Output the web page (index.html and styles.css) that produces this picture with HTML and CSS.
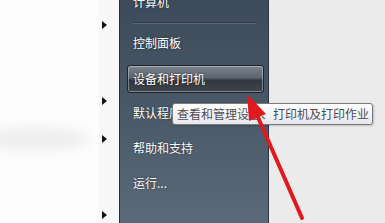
FILE: index.html
```html
<!DOCTYPE html>
<html lang="zh-CN">
<head>
<meta charset="utf-8">
<title>开始菜单</title>
<link rel="stylesheet" href="styles.css">
</head>
<body>
<div class="screen">
  <div class="left">
    <div class="blur"></div>
    <div class="strip">
      <div class="row"><span class="tri"></span></div>
      <div class="row"></div>
      <div class="row"><span class="tri"></span></div>
      <div class="row"><span class="tri"></span></div>
      <div class="row"></div>
      <div class="row"><span class="tri"></span></div>
    </div>
  </div>
  <div class="pane">
    <div class="item cut">计算机</div>
    <div class="sep"></div>
    <div class="item">控制面板</div>
    <div class="item"><div class="hl">设备和打印机</div></div>
    <div class="item">默认程序</div>
    <div class="item">帮助和支持</div>
    <div class="item">运行...</div>
  </div>
  <div class="desk"></div>
  <div class="tip">查看和管理设备、打印机及打印作业</div>
  <svg class="arrow" width="385" height="223" viewBox="0 0 385 223">
    <line x1="302" y1="218" x2="257" y2="115" stroke="#e0191f" stroke-width="4" stroke-linecap="round"/>
    <polygon points="247,94 266,114 249,121" fill="#e0191f"/>
  </svg>
</div>
</body>
</html>
```

FILE: styles.css
```css
html, body {
  margin: 0;
  padding: 0;
}
body {
  width: 385px;
  height: 223px;
  overflow: hidden;
  font-family: "Noto Sans CJK SC", "Noto Sans", sans-serif;
}
.screen {
  position: relative;
  display: flex;
  width: 385px;
  height: 223px;
  overflow: hidden;
}
.left {
  position: relative;
  width: 119px;
  height: 223px;
  background: #fdfdfd;
  display: flex;
  justify-content: flex-end;
}
.blur {
  position: absolute;
  left: -20px;
  top: 127px;
  width: 110px;
  height: 24px;
  border-radius: 50%;
  background: rgba(0, 0, 0, 0.06);
  filter: blur(6px);
}
.strip {
  width: 20px;
  height: 223px;
  overflow: hidden;
  background: #f7f7f7;
  padding-top: 6px;
  box-sizing: border-box;
  display: flex;
  flex-direction: column;
}
.row {
  height: 38px;
  flex: none;
  display: flex;
  align-items: center;
  padding-left: 3px;
}
.tri {
  width: 0;
  height: 0;
  border-top: 4px solid transparent;
  border-bottom: 4px solid transparent;
  border-left: 5px solid #111;
}
.pane {
  width: 148px;
  height: 223px;
  border-left: 1px solid #26313c;
  border-right: 1px solid #2a3541;
  box-shadow: 1px 0 0 #8796a4;
  background: linear-gradient(#3c4a59, #4a5968 50%, #5b6a79);
  display: flex;
  flex-direction: column;
}
.item {
  height: 35px;
  flex: none;
  display: flex;
  align-items: center;
  padding-left: 13px;
  color: #fff;
  font-size: 12px;
  text-shadow: 0 0 2px rgba(0, 0, 0, 0.6);
  white-space: nowrap;
}
.item.cut {
  margin-top: -16px;
}
.sep {
  height: 6px;
  flex: none;
  box-sizing: border-box;
  margin: 0 12px 0 13px;
  padding-top: 3px;
}
.sep::after {
  content: "";
  display: block;
  height: 1px;
  background: #2f3b47;
  box-shadow: 0 1px 0 rgba(255, 255, 255, 0.14);
}
.item .hl {
  margin-left: -6px;
  margin-right: 3px;
  margin-top: 2px;
  width: 137px;
  height: 28px;
  box-sizing: border-box;
  border: 1px solid #1d242c;
  border-radius: 3px;
  box-shadow: inset 0 0 0 1px rgba(255, 255, 255, 0.35);
  background: linear-gradient(#7b8590, #5b646e 45%, #30373f 55%, #3d454e);
  padding-left: 5px;
  display: flex;
  align-items: center;
}
.desk {
  flex: 1;
  height: 223px;
  background: #ebebeb;
}
.tip {
  position: absolute;
  left: 172px;
  top: 103px;
  width: 201px;
  height: 22px;
  box-sizing: border-box;
  border: 1px solid #7a7a7a;
  border-radius: 3px;
  background: linear-gradient(#ffffff, #e6e8ef);
  color: #4e4e4e;
  font-size: 12px;
  line-height: 20px;
  padding-left: 4px;
  white-space: nowrap;
  box-shadow: 1px 1px 2px rgba(0, 0, 0, 0.2);
}
.arrow {
  position: absolute;
  left: 0;
  top: 0;
}
```
